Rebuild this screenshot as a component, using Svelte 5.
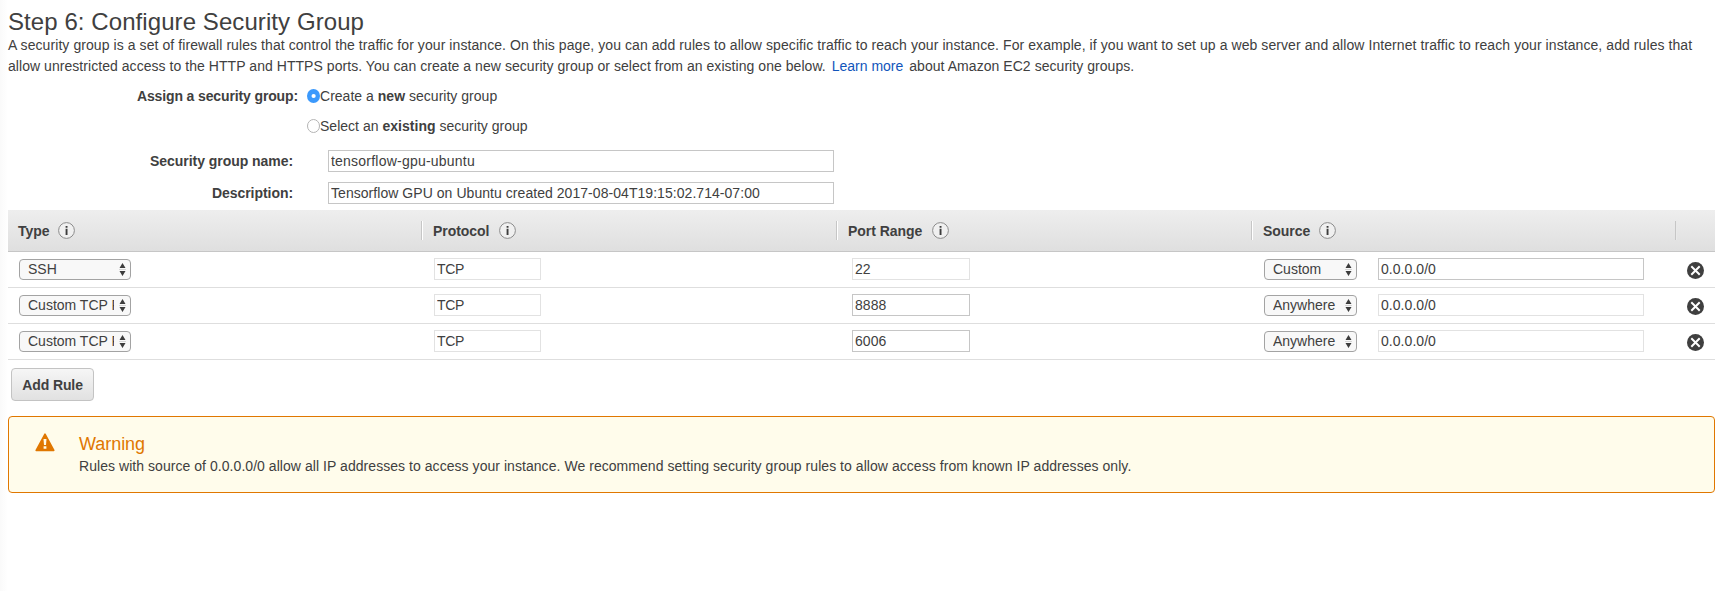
<script>
  let groupName = $state('tensorflow-gpu-ubuntu');
  let description = $state('Tensorflow GPU on Ubuntu created 2017-08-04T19:15:02.714-07:00');

  const columns = ['Type', 'Protocol', 'Port Range', 'Source'];
  const rules = [
    { type: 'SSH', protocol: 'TCP', port: '22', portFixed: true, source: 'Custom', cidr: '0.0.0.0/0', cidrFixed: false },
    { type: 'Custom TCP Rule', protocol: 'TCP', port: '8888', portFixed: false, source: 'Anywhere', cidr: '0.0.0.0/0', cidrFixed: true },
    { type: 'Custom TCP Rule', protocol: 'TCP', port: '6006', portFixed: false, source: 'Anywhere', cidr: '0.0.0.0/0', cidrFixed: true }
  ];
</script>

{#snippet picker(value, kind)}
  <button class="picker {kind}" type="button">
    <span class="value">{value}</span>
    <svg class="arrows" width="7" height="13" viewBox="0 0 7 13">
      <path d="M3.5 0 6.5 5H.5Z M3.5 13 .5 8h6Z" fill="#3c3c3c" />
      <path d="M0 6.5h7" stroke="#d4d4d4" />
    </svg>
  </button>
{/snippet}

<main>
  <h1>Step 6: Configure Security Group</h1>
  <p class="intro">
    A security group is a set of firewall rules that control the traffic for your instance. On this page, you can add rules to allow specific traffic to reach your instance. For example, if you want to set up a web server and allow Internet traffic to reach your instance, add rules that<br />
    <span class="second">allow unrestricted access to the HTTP and HTTPS ports. You can create a new security group or select from an existing one below. <span class="link">Learn more</span> about Amazon EC2 security groups.</span>
  </p>

  <div class="assign">
    <div class="assign-label">Assign a security group:</div>
    <div class="choices">
      <label class="choice">
        <svg width="13" height="14" viewBox="0 0 13 14"><ellipse cx="6.5" cy="7" rx="6.5" ry="7" fill="#3b99fc" /><circle cx="6.6" cy="7" r="2.1" fill="#fff" /></svg>
        <span>Create a <b>new</b> security group</span>
      </label>
      <label class="choice">
        <svg width="13" height="14" viewBox="0 0 13 14"><ellipse cx="6.5" cy="7" rx="6" ry="6.5" fill="#fff" stroke="#b4b4b4" /></svg>
        <span>Select an <b>existing</b> security group</span>
      </label>
    </div>
  </div>

  <div class="field">
    <label for="group-name">Security group name:</label>
    <input id="group-name" bind:value={groupName} />
  </div>
  <div class="field">
    <label for="description">Description:</label>
    <input id="description" bind:value={description} />
  </div>

  <section class="rules">
    <div class="row head">
      {#each columns as column}
        <div class="cell">
          <span>{column}</span>
          <svg width="17" height="17" viewBox="0 0 17 17">
            <circle cx="8.5" cy="8.5" r="7.9" fill="#f0f0f0" stroke="#8c8c8c" />
            <path d="M7.6 4h1.9v1.8H7.6z M7.6 6.8h1.9V13H7.6z" fill="#3c3c3c" />
          </svg>
        </div>
      {/each}
      <div></div>
    </div>
    {#each rules as rule}
      <div class="row rule">
        <div class="c-type">{@render picker(rule.type, 'type')}</div>
        <div class="c-protocol"><input class="fixed" value={rule.protocol} readonly /></div>
        <div class="c-port"><input class:fixed={rule.portFixed} value={rule.port} readonly={rule.portFixed} /></div>
        <div class="c-source">
          {@render picker(rule.source, 'source')}
          <input class:fixed={rule.cidrFixed} value={rule.cidr} readonly={rule.cidrFixed} />
        </div>
        <div class="c-remove">
          <svg width="17" height="17" viewBox="0 0 17 17">
            <circle cx="8.5" cy="8.5" r="8.5" fill="#3f3f3f" />
            <path d="m5 5 7 7M12 5l-7 7" stroke="#fff" stroke-width="2" stroke-linecap="square" />
          </svg>
        </div>
      </div>
    {/each}
  </section>

  <button class="add" type="button">Add Rule</button>

  <section class="warning">
    <svg width="20" height="19" viewBox="0 0 20 19">
      <path d="M10 1.2 18.8 17.4H1.2Z" fill="#e07700" stroke="#e07700" stroke-width="1.6" stroke-linejoin="round" />
      <path d="M8.5 6h3l-.5 6h-2z M8.6 13.2h2.8v2.6H8.6z" fill="#fffbe8" />
    </svg>
    <div>
      <h2>Warning</h2>
      <p>Rules with source of 0.0.0.0/0 allow all IP addresses to access your instance. We recommend setting security group rules to allow access from known IP addresses only.</p>
    </div>
  </section>
</main>

<style>
  :global(body) {
    background: #fff;
  }
  main {
    box-sizing: border-box;
    height: 591px;
    padding: 8px 9px 0 8px;
    background: linear-gradient(to right, #fafafa, #fff 8px);
    color: #404040;
    font: 14px/21px 'Liberation Sans', Arial, sans-serif;
    letter-spacing: 0.05px;
    overflow: hidden;
  }
  h1, h2, p {
    margin: 0;
    font-weight: normal;
  }
  h1 {
    font-size: 24px;
    line-height: 27px;
    letter-spacing: 0.078px;
  }
  .intro {
    white-space: nowrap;
    letter-spacing: 0.075px;
  }
  .second {
    letter-spacing: 0.05px;
  }
  .link {
    color: #1155bb;
    margin: 0 2px;
    letter-spacing: 0;
  }
  .assign {
    display: flex;
    margin-top: 8px;
  }
  .assign-label {
    width: 290px;
    padding-top: 1px;
    text-align: right;
    font-weight: bold;
    letter-spacing: -0.13px;
  }
  .choices {
    display: grid;
    gap: 9px;
    margin-left: 9px;
    letter-spacing: 0.02px;
  }
  .choice {
    display: flex;
    align-items: center;
    height: 21px;
  }
  .choice span {
    line-height: 20px;
    padding-top: 1px;
  }
  .field {
    display: flex;
    height: 22px;
    margin-bottom: 10px;
  }
  .assign + .field {
    margin-top: 14px;
  }
  .field label {
    width: 285px;
    margin-right: 35px;
    line-height: 22px;
    text-align: right;
    font-weight: bold;
    letter-spacing: -0.05px;
  }
  input {
    box-sizing: border-box;
    height: 22px;
    padding: 0 2px;
    border: 1px solid #c6c6c6;
    border-radius: 0;
    outline: 0;
    background: #fff;
    color: #404040;
    font: 14px/20px 'Liberation Sans', Arial, sans-serif;
    letter-spacing: 0.05px;
  }
  input.fixed {
    border-color: #e2e2e2;
  }
  .field input {
    width: 506px;
  }
  #group-name {
    letter-spacing: 0.22px;
  }
  .rules {
    margin-top: -4px;
  }
  .row {
    display: grid;
    grid-template-columns: 415px 415px 415px 424px 38px;
  }
  .head {
    height: 41px;
    align-items: center;
    border-bottom: 1px solid #c6c6c6;
    background: linear-gradient(#eee, #dfdfdf);
    font-weight: bold;
    letter-spacing: -0.04px;
  }
  .cell {
    display: flex;
    align-items: center;
    gap: 9.5px;
    height: 19px;
    padding-left: 10px;
    border-right: 1px solid #fff;
    box-shadow: inset -1px 0 #c6c6c6;
  }
  .cell:first-child {
    gap: 8.8px;
  }
  .cell span {
    padding-top: 2px;
    line-height: 19px;
  }
  .cell:nth-child(4) {
    gap: 9px;
    border-right-color: #e9e9e9;
  }
  .rule {
    height: 35px;
    border-bottom: 1px solid #dedede;
  }
  .rule > div {
    display: flex;
    align-items: flex-start;
    padding-top: 6px;
  }
  .rule .c-type {
    padding-left: 11px;
  }
  .rule .c-protocol {
    padding-left: 11px;
  }
  .rule .c-port {
    padding-left: 14px;
  }
  .rule .c-source {
    padding-left: 11px;
    gap: 21px;
  }
  .rule .c-remove {
    padding: 10px 0 0 10px;
  }
  .c-protocol input {
    width: 107px;
    letter-spacing: -0.3px;
  }
  .c-port input {
    width: 118px;
  }
  .c-source input {
    width: 266px;
  }
  .picker {
    display: flex;
    align-items: center;
    justify-content: space-between;
    box-sizing: border-box;
    height: 21px;
    margin: 1px 0 0;
    padding: 0 4px 0 8px;
    border: 1px solid #a3a3a3;
    border-radius: 4px;
    background: #f8f8f8;
    color: #404040;
    font: 14px/19px 'Liberation Sans', Arial, sans-serif;
    letter-spacing: 0;
    text-align: left;
  }
  .picker.type {
    width: 112px;
  }
  .picker.source {
    width: 93px;
  }
  .value {
    flex: 0 1 86px;
    overflow: hidden;
    white-space: nowrap;
  }
  .arrows {
    flex: none;
  }
  .add {
    display: block;
    width: 83px;
    height: 33px;
    margin: 8px 0 0 3px;
    padding: 2px 0 0;
    border: 1px solid #c3c3c3;
    border-radius: 4px;
    background: linear-gradient(#f6f6f6, #e1e1e1);
    color: #404040;
    font: bold 14px/29px 'Liberation Sans', Arial, sans-serif;
    letter-spacing: -0.1px;
  }
  .warning {
    display: flex;
    gap: 24px;
    box-sizing: border-box;
    height: 77px;
    margin-top: 15px;
    padding: 16px 0 0 26px;
    border: 1px solid #e07700;
    border-radius: 4px;
    background: #fffceb;
  }
  h2 {
    color: #e07700;
    font-size: 18px;
    line-height: 23px;
    letter-spacing: -0.05px;
  }
</style>
